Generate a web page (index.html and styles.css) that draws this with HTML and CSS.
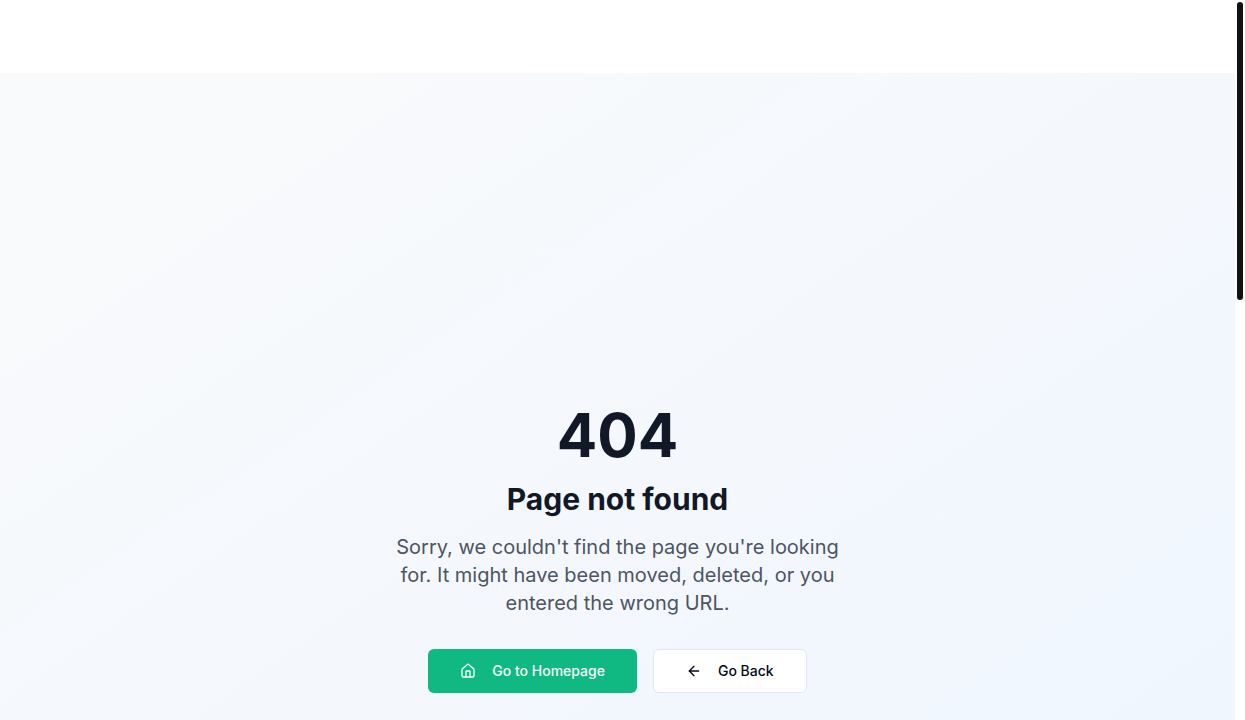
FILE: index.html
```
<!DOCTYPE html>
<html lang="en">
<head>
  <meta charset="UTF-8" />
  <meta name="viewport" content="width=device-width, initial-scale=1" />
  <title>Page not found</title>
  <link rel="stylesheet" href="styles.css">
</head>
<body>

  <div class="page">
    <header class="site-header"></header>

    <main class="not-found">
      <div class="content">
        <h1>404</h1>
        <h2>Page not found</h2>
        <p>Sorry, we couldn't find the page you're looking for. It might have been moved, deleted, or you entered the wrong URL.</p>

        <div class="actions">
          <a class="btn btn-primary" href="/">
            <svg class="icon" viewBox="0 0 24 24" aria-hidden="true">
              <path d="M15 21v-8a1 1 0 0 0-1-1h-4a1 1 0 0 0-1 1v8" />
              <path d="M3 10a2 2 0 0 1 .709-1.528l7-5.999a2 2 0 0 1 2.582 0l7 5.999A2 2 0 0 1 21 10v9a2 2 0 0 1-2 2H5a2 2 0 0 1-2-2z" />
            </svg>
            Go to Homepage
          </a>
          <button class="btn btn-outline" type="button" onclick="history.back()">
            <svg class="icon" viewBox="0 0 24 24" aria-hidden="true">
              <path d="m12 19-7-7 7-7" />
              <path d="M19 12H5" />
            </svg>
            Go Back
          </button>
        </div>
      </div>
    </main>
  </div>

  <div class="scroll-track">
    <div class="scroll-thumb"></div>
  </div>

</body>
</html>
```

FILE: styles.css
```
* {
  box-sizing: border-box;
}
body {
  margin: 0;
  height: 100vh;
  display: flex;
  overflow: hidden;
  background: white;
  color: #020817;
  font-family: Inter, "Liberation Sans", sans-serif;
  -webkit-font-smoothing: antialiased;
}
.page {
  flex: 1;
  overflow: hidden;
}
.site-header {
  height: 73px;
  background: white;
}
.not-found {
  padding: 332px 16px 236px;
  background: linear-gradient(to bottom right, #f9fafb, #eff6ff);
}
.content {
  max-width: 448px;
  margin: 0 auto;
  text-align: center;
}
h1 {
  margin: 0 0 16px;
  font-size: 60px;
  line-height: 60px;
  font-weight: 700;
  color: #111827;
}
h2 {
  margin: 0 0 16px;
  font-size: 30px;
  line-height: 36px;
  font-weight: 700;
  color: #111827;
}
p {
  margin: 0 0 32px;
  font-size: 20px;
  line-height: 28px;
  color: #4b5563;
}
.actions {
  display: flex;
  justify-content: center;
  gap: 16px;
}
.btn {
  display: inline-flex;
  align-items: center;
  gap: 16px;
  height: 44px;
  padding: 0 32px;
  border: 0;
  border-radius: 6px;
  font-family: inherit;
  font-size: 14px;
  line-height: 20px;
  font-weight: 500;
  white-space: nowrap;
  text-decoration: none;
  cursor: pointer;
}
.btn-primary {
  background: #10b981;
  color: #f8fafc;
}
.btn-outline {
  border: 1px solid #e2e8f0;
  background: white;
  color: #020817;
}
.icon {
  width: 16px;
  height: 16px;
  fill: none;
  stroke: currentColor;
  stroke-width: 2;
  stroke-linecap: round;
  stroke-linejoin: round;
}
.scroll-track {
  width: 10px;
  padding: 2px;
  background: white;
}
.scroll-thumb {
  height: 298px;
  border-radius: 3px;
  background: #111;
}
```
